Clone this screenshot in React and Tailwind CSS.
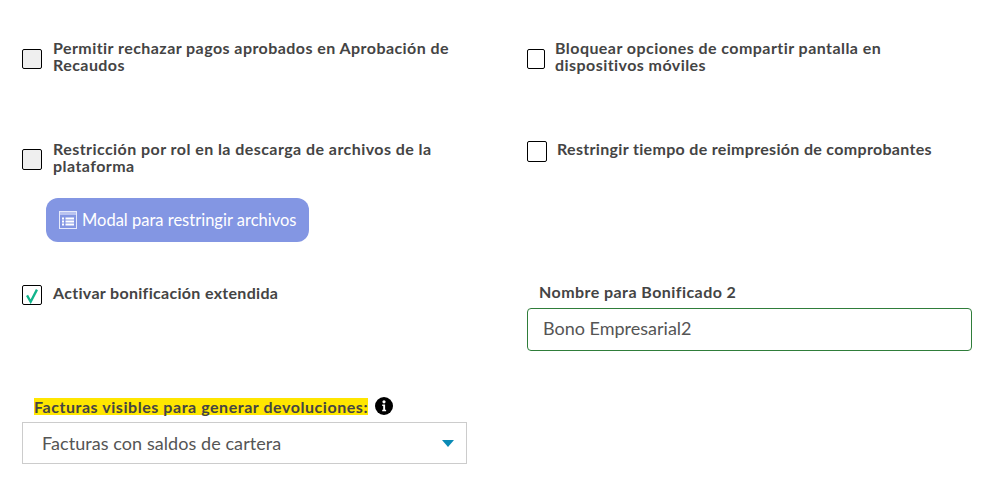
import React from 'react';

const Check = ({ className, checked }) => (
  <span className={`relative block shrink-0 border border-black rounded-[2px] ${className}`}>
    {checked && (
      <svg viewBox="0 0 20 20" className="absolute left-0 top-0 w-[18px] h-[18px]">
        <path d="M4.5 10.5 L8.5 17.5 L15.5 4" fill="none" stroke="#12b48c" strokeWidth="2.6" />
      </svg>
    )}
  </span>
);

const TableIcon = () => (
  <svg viewBox="0 0 18 18" className="w-[18px] h-[18px] shrink-0">
    <rect x="0.5" y="0.5" width="17" height="17" fill="none" stroke="#e6eafb" strokeWidth="1" />
    <rect x="0.5" y="0.5" width="17" height="3.5" fill="#e6eafb" opacity="0.55" />
    <path d="M3 7.5h2M6.5 7.5h8.5M3 10.5h2M6.5 10.5h8.5M3 13.5h2M6.5 13.5h8.5" stroke="#ffffff" strokeWidth="1.8" />
  </svg>
);

const labelClass = "text-[16px] leading-[17px] font-bold text-[#444444]";

export default function App() {
  return (
    <div className="w-[1007px] h-[478px] overflow-hidden bg-white font-['Lato',sans-serif]">
      <div className="grid grid-cols-[527px_1fr] pt-[39px]">
        {/* fila 1 */}
        <div className="h-[101px] pl-[22px] flex items-start">
          <Check className="w-5 h-5 mt-[10px] bg-[#efefef]" />
          <p className={`${labelClass} tracking-[0.44px] ml-[11px] w-[410px]`}>Permitir rechazar pagos aprobados en Aprobación de Recaudos</p>
        </div>
        <div className="h-[101px] flex items-start">
          <Check className="w-[18px] h-5 mt-[10px]" />
          <p className={`${labelClass} tracking-[0.44px] ml-[10px] w-[360px]`}>Bloquear opciones de compartir pantalla en dispositivos móviles</p>
        </div>

        {/* fila 2 */}
        <div className="h-[144px] pl-[22px]">
          <div className="flex items-start">
            <Check className="w-5 h-[21px] mt-[9px] bg-[#efefef]" />
            <p className={`${labelClass} tracking-[0.44px] ml-[11px] w-[400px]`}>Restricción por rol en la descarga de archivos de la plataforma</p>
          </div>
          <button className="mt-6 ml-6 w-[263px] h-11 rounded-xl bg-[#8396e3] flex items-center pl-[13px] gap-[5px] text-white text-[16.5px]">
            <TableIcon />
            Modal para restringir archivos
          </button>
        </div>
        <div className="h-[144px] flex items-start">
          <Check className="w-5 h-[21px] mt-px" />
          <p className={`${labelClass} tracking-[0.32px] ml-[10px]`}>Restringir tiempo de reimpresión de comprobantes</p>
        </div>

        {/* fila 3 */}
        <div className="h-[114px] pl-[22px] flex items-start">
          <Check className="w-5 h-5 mt-px" checked />
          <p className={`${labelClass} tracking-[0.31px] ml-[11px]`}>Activar bonificación extendida</p>
        </div>
        <div className="h-[114px]">
          <label className={`${labelClass} tracking-[0.44px] block ml-3 -mt-px`}>Nombre para Bonificado 2</label>
          <div className="mt-2 w-[445px] h-[43px] border border-[#2f7d3a] rounded-[4px] flex items-center pl-[15px] pb-[3px] text-[18px] text-[#555555]">
            Bono Empresarial2
          </div>
        </div>

        {/* fila 4 */}
        <div className="pl-[22px]">
          <div className="flex items-center ml-3 h-4">
            <span className={`${labelClass} tracking-[0.55px] leading-[14px] bg-[#ffe600] text-[#3a3a1a]`}>Facturas visibles para generar devoluciones:</span>
            <svg viewBox="0 0 18 18" className="w-[18px] h-[18px] ml-[7px]">
              <circle cx="9" cy="9" r="9" fill="#000" />
              <circle cx="9" cy="4.8" r="1.6" fill="#fff" />
              <path d="M7.2 7.6h2.9v5.2h1v1.4H7.2v-1.4h1v-3.8h-1z" fill="#fff" />
            </svg>
          </div>
          <div className="mt-2 w-[445px] h-[42px] border border-[#cccccc] flex items-center justify-between pl-[19px] pr-3 text-[18px] tracking-[0.07px] text-[#555555]">
            Facturas con saldos de cartera
            <svg viewBox="0 0 12 7" className="w-3 h-[7px]"><path d="M0 0h12L6 7z" fill="#0a8ab5" /></svg>
          </div>
        </div>
        <div />
      </div>
    </div>
  );
}
